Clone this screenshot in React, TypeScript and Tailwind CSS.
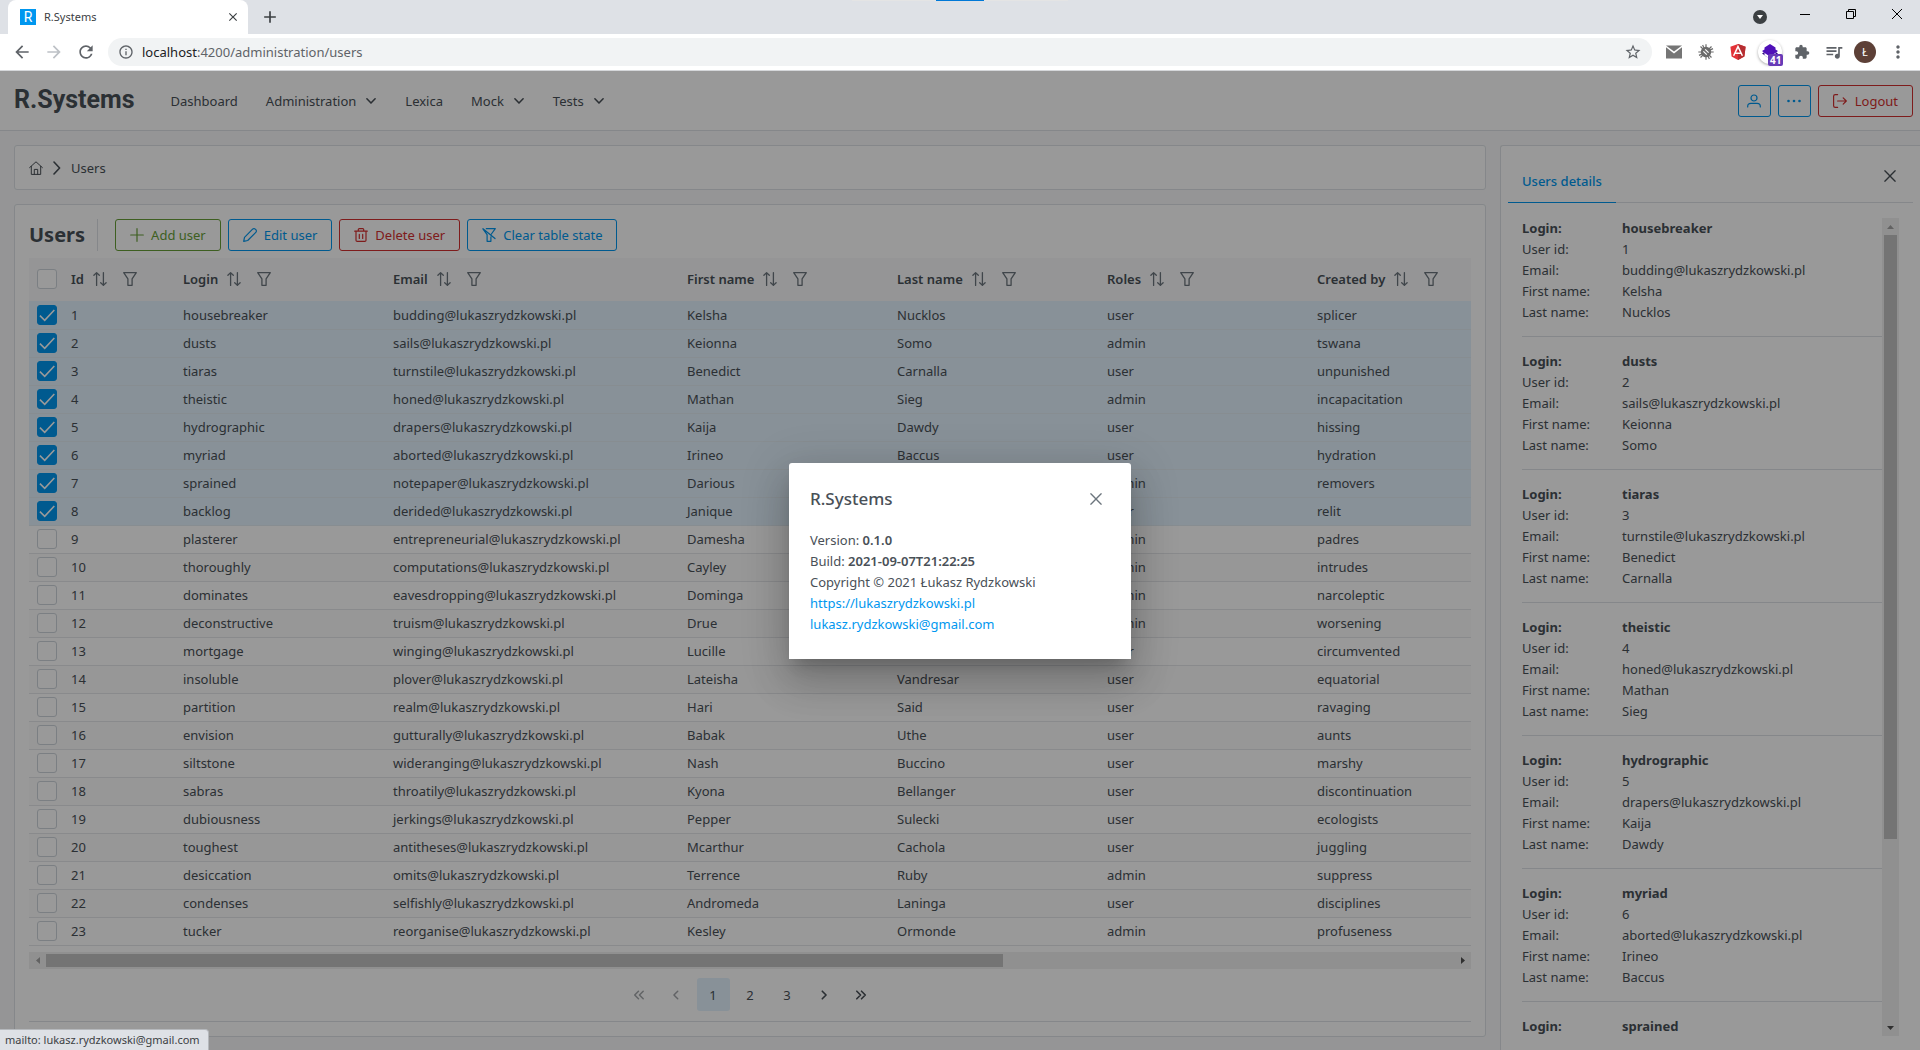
import type { ReactNode } from "react";
import {
  MdAdd,
  MdArrowBack,
  MdArrowForward,
  MdClose,
  MdExtension,
  MdInfoOutline,
  MdMoreVert,
  MdQueueMusic,
  MdRefresh,
  MdStarBorder,
} from "react-icons/md";

type User = {
  id: number;
  login: string;
  email: string;
  first: string;
  last: string;
  role: string;
  createdBy: string;
};

const rows: [string, string, string, string, string, string][] = [
  ["housebreaker", "budding", "Kelsha", "Nucklos", "user", "splicer"],
  ["dusts", "sails", "Keionna", "Somo", "admin", "tswana"],
  ["tiaras", "turnstile", "Benedict", "Carnalla", "user", "unpunished"],
  ["theistic", "honed", "Mathan", "Sieg", "admin", "incapacitation"],
  ["hydrographic", "drapers", "Kaija", "Dawdy", "user", "hissing"],
  ["myriad", "aborted", "Irineo", "Baccus", "user", "hydration"],
  ["sprained", "notepaper", "Darious", "Rossman", "admin", "removers"],
  ["backlog", "derided", "Janique", "Tinoco", "user", "relit"],
  ["plasterer", "entrepreneurial", "Damesha", "Holter", "admin", "padres"],
  ["thoroughly", "computations", "Cayley", "Brandt", "admin", "intrudes"],
  ["dominates", "eavesdropping", "Dominga", "Varela", "admin", "narcoleptic"],
  ["deconstructive", "truism", "Drue", "Keller", "admin", "worsening"],
  ["mortgage", "winging", "Lucille", "Parrish", "user", "circumvented"],
  ["insoluble", "plover", "Lateisha", "Vandresar", "user", "equatorial"],
  ["partition", "realm", "Hari", "Said", "user", "ravaging"],
  ["envision", "gutturally", "Babak", "Uthe", "user", "aunts"],
  ["siltstone", "wideranging", "Nash", "Buccino", "user", "marshy"],
  ["sabras", "throatily", "Kyona", "Bellanger", "user", "discontinuation"],
  ["dubiousness", "jerkings", "Pepper", "Sulecki", "user", "ecologists"],
  ["toughest", "antitheses", "Mcarthur", "Cachola", "user", "juggling"],
  ["desiccation", "omits", "Terrence", "Ruby", "admin", "suppress"],
  ["condenses", "selfishly", "Andromeda", "Laninga", "user", "disciplines"],
  ["tucker", "reorganise", "Kesley", "Ormonde", "admin", "profuseness"],
];

const users: User[] = rows.map(([login, mail, first, last, role, createdBy], i) => ({
  id: i + 1,
  login,
  email: `${mail}@lukaszrydzkowski.pl`,
  first,
  last,
  role,
  createdBy,
}));

const SELECTED = 8;

function Icon({ children, className = "size-3.5", width = 1.2 }: { children: ReactNode; className?: string; width?: number }) {
  return (
    <svg
      viewBox="0 0 14 14"
      className={`shrink-0 ${className}`}
      fill="none"
      stroke="currentColor"
      strokeWidth={width}
      strokeLinecap="round"
      strokeLinejoin="round"
      aria-hidden="true"
    >
      {children}
    </svg>
  );
}

const UserIcon = () => (
  <Icon>
    <circle cx="7" cy="4" r="3" />
    <path d="M.7 13v-.6c0-2 1.6-3 3.2-3h6.2c1.6 0 3.2 1 3.2 3v.6" />
  </Icon>
);
const DotsIcon = () => (
  <Icon>
    <g fill="currentColor" stroke="none">
      <circle cx="1.5" cy="7" r="1.3" />
      <circle cx="7" cy="7" r="1.3" />
      <circle cx="12.5" cy="7" r="1.3" />
    </g>
  </Icon>
);
const SignOutIcon = () => (
  <Icon>
    <path d="M4.6.6H2.2C1.2.6.6 1.2.6 2.2v9.6c0 1 .6 1.6 1.6 1.6h2.4M4.6 7h8.7M10.2 3.9 13.3 7l-3.1 3.1" />
  </Icon>
);
const HomeIcon = () => (
  <Icon width={1}>
    <path d="M.6 6.6 7 .8l6.4 5.8M2.3 5.4v8h9.4v-8M5.3 13.2V8.4h3.4v4.8" />
  </Icon>
);
const PlusIcon = () => (
  <Icon>
    <path d="M7 .7v12.6M.7 7h12.6" />
  </Icon>
);
const PencilIcon = () => (
  <Icon>
    <path d="M.7 13.3l.8-4L9.6 1.2c.8-.8 2-.8 2.7 0l.5.5c.8.8.8 2 0 2.7L4.7 12.5z" />
  </Icon>
);
const TrashIcon = () => (
  <Icon>
    <path d="M.7 3.2h12.6M2 3.4v8.8c0 .7.5 1.2 1.2 1.2h7.6c.7 0 1.2-.5 1.2-1.2V3.4M4.3 3V1.6c0-.6.4-1 1-1h3.4c.6 0 1 .4 1 1V3M5.3 6.4v4M8.7 6.4v4" />
  </Icon>
);
const FilterSlashIcon = () => (
  <Icon>
    <path d="M4.3.7h9L9.4 6M8.9 8.8v4.5H5.1V6.7L.9.9M1 .7l12 9.8" />
  </Icon>
);
const SortIcon = () => (
  <Icon className="h-4 w-3.5" width={1.3}>
    <path d="M3.6 13.4V.6M.9 3.3 3.6.6l2.7 2.7M10.4.6v12.8M7.7 10.7l2.7 2.7 2.7-2.7" />
  </Icon>
);
const FilterIcon = () => (
  <Icon className="h-4 w-3.5" width={1.3}>
    <path d="M.7.7h12.6L9.1 6.9v6.4H4.9V6.9z" />
  </Icon>
);
const TimesIcon = () => (
  <Icon className="size-3" width={1.6}>
    <path d="M1 1l12 12M13 1 1 13" />
  </Icon>
);
const ChevronDown = () => (
  <Icon className="size-3" width={1.8}>
    <path d="M2.2 4.4 7 9.4l4.8-5" />
  </Icon>
);

function BrowserChrome() {
  return (
    <div className="shrink-0 text-[#3c4043]">
      <div className="relative flex h-[34px] items-center bg-[#dee1e6]">
        <div className="absolute top-0 left-1/2 flex h-px w-[216px] -translate-x-1/2 justify-center bg-[#e4e4e4]">
          <div className="w-12 bg-[#0078d7]" />
        </div>
        <div className="ml-2 flex h-full w-60 items-center rounded-t-lg bg-white pr-2 pl-3">
          <span className="grid h-4 w-4 place-items-center bg-[#0097ef] font-[Roboto] text-sm leading-4 text-white">R</span>
          <span className="ml-2 flex-1 pb-px text-[11px]">R.Systems</span>
          <button type="button" aria-label="Close tab">
            <MdClose className="size-3.5" />
          </button>
        </div>
        <button type="button" aria-label="New tab" className="ml-3">
          <MdAdd className="size-5" />
        </button>
        <div className="ml-auto flex items-center text-black">
          <button type="button" aria-label="Search tabs" className="mr-8 grid size-3.5 place-items-center rounded-full bg-[#3c4043]">
            <svg viewBox="0 0 6 4" className="h-1 w-1.5" fill="#fff">
              <path d="M0 0h6L3 4z" />
            </svg>
          </button>
          <button type="button" aria-label="Minimize" className="mr-[34px] pb-1.5">
            <svg viewBox="0 0 12 12" className="size-3">
              <path d="M1 6.5h10" stroke="currentColor" />
            </svg>
          </button>
          <button type="button" aria-label="Restore" className="mr-[34px] pb-1.5">
            <svg viewBox="0 0 12 12" className="size-3" fill="none" stroke="currentColor">
              <path d="M1.5 3.5h7v7h-7zM3.5 3.5v-2h7v7h-2" />
            </svg>
          </button>
          <button type="button" aria-label="Close" className="mr-[17px] pb-1.5">
            <svg viewBox="0 0 12 12" className="size-3" fill="none" stroke="currentColor">
              <path d="M1 1l10 10M11 1 1 11" />
            </svg>
          </button>
        </div>
      </div>
      <div className="flex h-[37px] items-center border-b border-[#d5d7da] bg-white pr-3 pl-3 text-[#5f6368]">
        <button type="button" aria-label="Back">
          <MdArrowBack className="size-5" />
        </button>
        <button type="button" aria-label="Forward" className="ml-3 text-[#bdc1c6]">
          <MdArrowForward className="size-5" />
        </button>
        <button type="button" aria-label="Reload" className="ml-3">
          <MdRefresh className="size-5" />
        </button>
        <div className="ml-3 flex h-7 flex-1 items-center rounded-full bg-[#f1f3f4] px-2.5">
          <MdInfoOutline className="size-4" />
          <span className="ml-2 flex-1 text-[13px]">
            <span className="text-[#202124]">localhost</span>:4200/administration/users
          </span>
          <button type="button" aria-label="Bookmark">
            <MdStarBorder className="size-[18px]" />
          </button>
        </div>
        <div className="ml-3.5 flex items-center gap-4">
          <button type="button" aria-label="Mail">
            <svg viewBox="0 0 16 16" className="size-4">
              <path d="M0 1.5h16L8 7.6z" fill="#757575" />
              <path d="M0 3.2 8 9.4l8-6.2v11.3H0z" fill="#757575" />
            </svg>
          </button>
          <button type="button" aria-label="Debugger">
            <svg viewBox="0 0 16 16" className="size-4" fill="none" stroke="#6b6b6b">
              <path d="M8 .3v15.4M.3 8h15.4M2.5 2.5l11 11M13.5 2.5l-11 11M4.6 1l6.8 14M15 4.6 1 11.4" strokeWidth="1.2" />
              <circle cx="8" cy="8" r="5.2" fill="#6b6b6b" stroke="none" />
              <path d="M5.4 7.4 8.8 10.6M7.2 5.4l3.4 3.2" stroke="#fff" strokeWidth="1.2" />
            </svg>
          </button>
          <button type="button" aria-label="Angular">
            <svg viewBox="0 0 16 16" className="size-4">
              <path d="M8 0l7.6 2.7-1.2 9.7L8 16l-6.4-3.6L.4 2.7z" fill="#e23237" />
              <path d="M8 0l7.6 2.7-1.2 9.7L8 16z" fill="#b52e31" />
              <path d="M3.6 11.8 8 2.6l4.4 9.2M5.4 9.2h5.2" fill="none" stroke="#fff" strokeWidth="1.5" />
            </svg>
          </button>
          <button type="button" aria-label="Extension, 41 items" className="relative -mx-1 grid size-6 place-items-center rounded-full bg-white shadow-[0_1px_3px_rgba(0,0,0,0.35)]">
            <svg viewBox="0 0 16 16" className="size-4">
              <path d="M0 9.5 2.5 8v3.5L8 15l5.5-3.5V8L16 9.5 8 15z" fill="#2d0a80" />
              <path d="M8 0l5.5 3.5v2L16 7l-2.5 2L8 12.5 2.5 9 0 7l2.5-1.5v-2z" fill="#4f10b8" />
            </svg>
            <span className="absolute top-3.5 left-2.5 rounded-xs bg-[#673ab7] px-0.5 text-[10px] leading-3 font-bold text-white">41</span>
          </button>
          <button type="button" aria-label="Extensions">
            <MdExtension className="size-4" />
          </button>
          <button type="button" aria-label="Media" className="-mr-1.5 -ml-0.5">
            <MdQueueMusic className="size-5" />
          </button>
          <button type="button" aria-label="Profile" className="-mr-1 grid size-[22px] place-items-center rounded-full bg-[#5d4037] text-[11px] text-white">
            Ł
          </button>
          <button type="button" aria-label="Menu">
            <MdMoreVert className="size-5" />
          </button>
        </div>
      </div>
    </div>
  );
}

const navItems: [string, boolean][] = [
  ["Dashboard", false],
  ["Administration", true],
  ["Lexica", false],
  ["Mock", true],
  ["Tests", true],
];

function Header() {
  return (
    <header className="flex h-[60px] shrink-0 items-center border-b border-[#dee2e6] bg-white pr-[7px] pl-3.5">
      <h1 className="pb-0.5 font-[Roboto] text-[25px] font-bold">R.Systems</h1>
      <nav className="ml-9 flex items-center gap-7 pt-px">
        {navItems.map(([label, menu]) => (
          <a key={label} href={`#${label.toLowerCase()}`} className="flex items-center gap-[9px]">
            {label}
            {menu && <ChevronDown />}
          </a>
        ))}
      </nav>
      <div className="ml-auto flex gap-[7px] pt-px">
        <button type="button" aria-label="Account" className="grid h-8 w-[33px] place-items-center rounded-[3px] border border-[#0097ef] text-[#0097ef]">
          <UserIcon />
        </button>
        <button type="button" aria-label="More" className="grid h-8 w-[33px] place-items-center rounded-[3px] border border-[#0097ef] text-[#0097ef]">
          <DotsIcon />
        </button>
        <button type="button" className="flex h-8 items-center gap-2 rounded-[3px] border border-[#d32f2f] px-3.5 text-[#d32f2f]">
          <SignOutIcon />
          Logout
        </button>
      </div>
    </header>
  );
}

function CheckCell({ checked, label }: { checked: boolean; label: string }) {
  return (
    <label className="grid size-5 place-items-center">
      <input
        type="checkbox"
        defaultChecked={checked}
        aria-label={label}
        className="peer col-start-1 row-start-1 size-5 appearance-none rounded-[3px] border border-[#ced4da] bg-white checked:border-[#0097ef] checked:bg-[#0097ef]"
      />
      <svg viewBox="0 0 14 14" className="pointer-events-none col-start-1 row-start-1 hidden size-4 peer-checked:block" fill="none" stroke="#fff" strokeWidth="1.4">
        <path d="M.8 7.6 5 11.6 13.4 2.6" />
      </svg>
    </label>
  );
}

const columns = ["Id", "Login", "Email", "First name", "Last name", "Roles", "Created by"];

function UsersTable() {
  return (
    <div className="overflow-hidden">
      <table className="w-[2121px] table-fixed border-collapse text-left">
        <colgroup>
          <col className="w-[35px]" />
          <col className="w-28" />
          <col className="w-[210px]" />
          <col className="w-[294px]" />
          <col className="w-[210px]" />
          <col className="w-[210px]" />
          <col className="w-[210px]" />
          <col />
        </colgroup>
        <thead>
          <tr className="h-[43px] bg-[#f8f9fa]">
            <th className="pb-0.5 pl-2">
              <CheckCell checked={false} label="Select all users" />
            </th>
            {columns.map((c) => (
              <th key={c} className="px-[7px] pb-0.5 font-semibold">
                <span className="flex items-center">
                  {c}
                  <button type="button" aria-label={`Sort by ${c}`} className="ml-[9px] text-[#6c757d]">
                    <SortIcon />
                  </button>
                  <button type="button" aria-label={`Filter by ${c}`} className="ml-4 text-[#6c757d]">
                    <FilterIcon />
                  </button>
                </span>
              </th>
            ))}
          </tr>
        </thead>
        <tbody>
          {users.map((u) => {
            const selected = u.id <= SELECTED;
            return (
              <tr
                key={u.id}
                className={selected ? "h-7 border-b border-[#e2ecf2] bg-[#e3f2fd]" : "h-7 border-b border-[#e4e7ea] even:bg-[#fcfcfc]"}
              >
                <td className="pl-2">
                  <CheckCell checked={selected} label={`Select ${u.login}`} />
                </td>
                <td className="px-[7px]">{u.id}</td>
                <td className="px-[7px]">{u.login}</td>
                <td className="px-[7px]">{u.email}</td>
                <td className="px-[7px]">{u.first}</td>
                <td className="px-[7px]">{u.last}</td>
                <td className="px-[7px]">{u.role}</td>
                <td className="px-[7px]">{u.createdBy}</td>
              </tr>
            );
          })}
        </tbody>
      </table>
    </div>
  );
}

function HorizontalScrollbar() {
  return (
    <div className="mt-1.5 flex h-[17px] items-center bg-[#f1f1f1]">
      <span className="grid w-[17px] place-items-center">
        <svg viewBox="0 0 4 7" className="h-[7px] w-1" fill="#a3a3a3">
          <path d="M4 0v7L0 3.5z" />
        </svg>
      </span>
      <div className="flex-1">
        <div className="h-[13px] w-[68%] bg-[#c1c1c1]" />
      </div>
      <span className="grid w-[17px] place-items-center">
        <svg viewBox="0 0 4 7" className="h-[7px] w-1" fill="#505050">
          <path d="M0 0v7l4-3.5z" />
        </svg>
      </span>
    </div>
  );
}

const pageButton = "grid h-[33px] w-[33px] place-items-center rounded-[3px]";

function Paginator() {
  return (
    <nav aria-label="Pages" className="flex h-[53px] items-center justify-center gap-1 border-b border-[#dee2e6]">
      <button type="button" disabled aria-label="First page" className={`${pageButton} opacity-50`}>
        <Icon className="size-3" width={1.7}>
          <path d="M6.4 2.6 2 7l4.4 4.4M11.9 2.6 7.5 7l4.4 4.4" />
        </Icon>
      </button>
      <button type="button" disabled aria-label="Previous page" className={`${pageButton} opacity-50`}>
        <Icon className="size-3" width={1.7}>
          <path d="M9 2.6 4.6 7 9 11.4" />
        </Icon>
      </button>
      <button type="button" className={`${pageButton} bg-[#e3f2fd]`}>1</button>
      <button type="button" className={pageButton}>2</button>
      <button type="button" className={pageButton}>3</button>
      <button type="button" aria-label="Next page" className={pageButton}>
        <Icon className="size-3" width={1.9}>
          <path d="M5 2.6 9.4 7 5 11.4" />
        </Icon>
      </button>
      <button type="button" aria-label="Last page" className={pageButton}>
        <Icon className="size-3" width={1.9}>
          <path d="M2.1 2.6 6.5 7l-4.4 4.4M7.6 2.6 12 7l-4.4 4.4" />
        </Icon>
      </button>
    </nav>
  );
}

const toolButton = "flex h-8 items-center gap-[7px] rounded-[3px] border px-3.5";

function UsersCard() {
  return (
    <section className="rounded-[3px] border border-[#dee2e6] bg-white p-3.5">
      <div className="mb-[7px] flex items-center gap-[7px]">
        <h2 className="mr-[5px] text-xl leading-8 font-bold">Users</h2>
        <span className="mr-2.5 h-8 w-px bg-[#dee2e6]" />
        <button type="button" className={`${toolButton} border-[#689f38] text-[#689f38]`}>
          <PlusIcon />
          Add user
        </button>
        <button type="button" className={`${toolButton} border-[#0097ef] text-[#0097ef]`}>
          <PencilIcon />
          Edit user
        </button>
        <button type="button" className={`${toolButton} border-[#d32f2f] text-[#d32f2f]`}>
          <TrashIcon />
          Delete user
        </button>
        <button type="button" className={`${toolButton} border-[#0097ef] text-[#0097ef]`}>
          <FilterSlashIcon />
          Clear table state
        </button>
      </div>
      <UsersTable />
      <HorizontalScrollbar />
      <Paginator />
    </section>
  );
}

function DetailsPanel() {
  return (
    <aside className="flex w-[420px] shrink-0 flex-col rounded-tl-[3px] border-t border-l border-[#dee2e6] bg-white px-[7px] py-3.5">
      <div className="flex h-[43px] items-end justify-between border-b border-[#dee2e6]">
        <button type="button" className="-mb-px h-11 border-b border-[#0097ef] px-3.5 font-medium text-[#0097ef]">
          Users details
        </button>
        <button type="button" aria-label="Close details" className="mr-[17px] mb-5">
          <TimesIcon />
        </button>
      </div>
      <div className="mx-3.5 mt-[15px] flex min-h-0 flex-1">
        <ul className="flex-1 overflow-hidden">
          {users.slice(0, SELECTED - 1).map((u) => (
            <li key={u.id} className="mb-3.5 border-b border-[#dee2e6] pb-[13px] leading-[21px]">
              <dl className="grid grid-cols-[100px_1fr]">
                <dt className="font-bold">Login:</dt>
                <dd className="font-bold">{u.login}</dd>
                <dt>User id:</dt>
                <dd>{u.id}</dd>
                <dt>Email:</dt>
                <dd>{u.email}</dd>
                <dt>First name:</dt>
                <dd>{u.first}</dd>
                <dt>Last name:</dt>
                <dd>{u.last}</dd>
              </dl>
            </li>
          ))}
        </ul>
        <div className="flex w-[17px] shrink-0 flex-col items-center bg-[#f1f1f1]">
          <span className="grid h-[17px] place-items-center">
            <svg viewBox="0 0 7 4" className="h-1 w-[7px]" fill="#a3a3a3">
              <path d="M0 4h7L3.5 0z" />
            </svg>
          </span>
          <div className="w-[13px] flex-1">
            <div className="h-[77%] bg-[#c1c1c1]" />
          </div>
          <span className="grid h-[17px] place-items-center">
            <svg viewBox="0 0 7 4" className="h-1 w-[7px]" fill="#505050">
              <path d="M0 0h7L3.5 4z" />
            </svg>
          </span>
        </div>
      </div>
    </aside>
  );
}

function AboutDialog() {
  return (
    <div className="absolute inset-0 grid place-items-center bg-black/40">
      <div
        role="dialog"
        aria-labelledby="about-title"
        className="w-[342px] rounded-t-[3px] bg-white text-[#495057] shadow-[0_11px_15px_-7px_rgba(0,0,0,0.2),0_24px_38px_3px_rgba(0,0,0,0.14),0_9px_46px_8px_rgba(0,0,0,0.12)]"
      >
        <div className="flex items-center justify-between px-[21px] pt-[22px] pb-[17px]">
          <h2 id="about-title" className="text-[17px] leading-7 font-medium">
            R.Systems
          </h2>
          <button type="button" aria-label="Close dialog" className="mr-2 text-[#6c757d]">
            <TimesIcon />
          </button>
        </div>
        <div className="px-[21px] pb-6 leading-[21px]">
          <p>
            Version: <b className="font-semibold">0.1.0</b>
          </p>
          <p>
            Build: <b className="font-semibold">2021-09-07T21:22:25</b>
          </p>
          <p>Copyright © 2021 Łukasz Rydzkowski</p>
          <p>
            <a href="https://lukaszrydzkowski.pl" className="text-[#0097ef]">
              https://lukaszrydzkowski.pl
            </a>
          </p>
          <p>
            <a href="mailto:lukasz.rydzkowski@gmail.com" className="text-[#0097ef]">
              lukasz.rydzkowski@gmail.com
            </a>
          </p>
        </div>
      </div>
    </div>
  );
}

export default function App() {
  return (
    <div className="relative flex h-screen flex-col overflow-hidden font-['Noto_Sans',sans-serif] text-[13px] leading-5">
      <BrowserChrome />
      <div className="relative flex min-h-0 flex-1 flex-col bg-[#f8f9fa] text-[#495057]">
        <Header />
        <div className="flex min-h-0 flex-1 gap-3.5 pt-3.5 pl-3.5">
          <main className="flex min-w-0 flex-1 flex-col gap-3.5">
            <nav aria-label="Breadcrumb" className="flex h-[45px] shrink-0 items-center rounded-[3px] border border-[#dee2e6] bg-white px-3.5">
              <a href="#home" aria-label="Home">
                <HomeIcon />
              </a>
              <Icon className="mx-[7px] size-3.5" width={1.6}>
                <path d="M4 1l5.6 6L4 13" />
              </Icon>
              <a href="#users">Users</a>
            </nav>
            <UsersCard />
          </main>
          <DetailsPanel />
        </div>
        <AboutDialog />
      </div>
      <div className="absolute bottom-0 left-0 rounded-tr-sm border-t border-r border-[#b5b8bc] bg-[#dee1e6] pr-2 pl-[5px] text-[11px] text-[#3c4043]">
        mailto: lukasz.rydzkowski@gmail.com
      </div>
    </div>
  );
}
